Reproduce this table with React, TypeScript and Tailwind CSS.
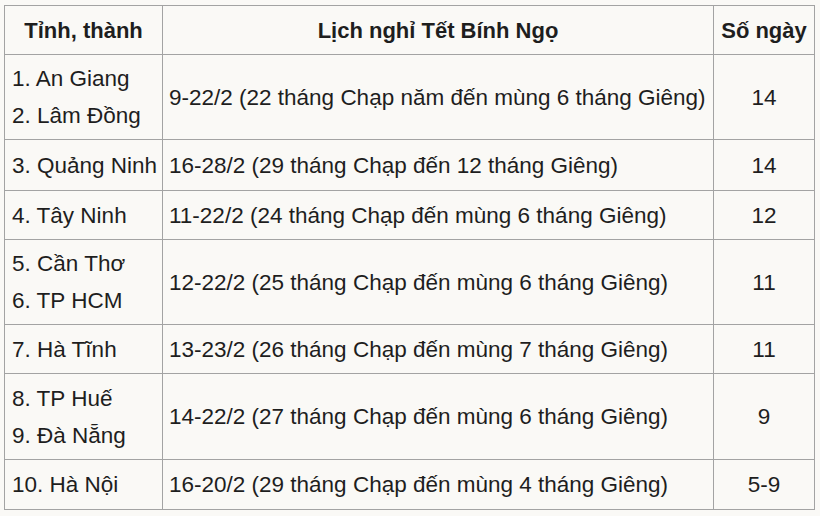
import React from "react";

type Row = { names: string[]; schedule: string; days: string; h: string };

const rows: Row[] = [
  { names: ["1. An Giang", "2. Lâm Đồng"], schedule: "9-22/2 (22 tháng Chạp năm đến mùng 6 tháng Giêng)", days: "14", h: "h-[85px]" },
  { names: ["3. Quảng Ninh"], schedule: "16-28/2 (29 tháng Chạp đến 12 tháng Giêng)", days: "14", h: "h-[51px]" },
  { names: ["4. Tây Ninh"], schedule: "11-22/2 (24 tháng Chạp đến mùng 6 tháng Giêng)", days: "12", h: "h-[49px]" },
  { names: ["5. Cần Thơ", "6. TP HCM"], schedule: "12-22/2 (25 tháng Chạp đến mùng 6 tháng Giêng)", days: "11", h: "h-[85px]" },
  { names: ["7. Hà Tĩnh"], schedule: "13-23/2 (26 tháng Chạp đến mùng 7 tháng Giêng)", days: "11", h: "h-[49px]" },
  { names: ["8. TP Huế", "9. Đà Nẵng"], schedule: "14-22/2 (27 tháng Chạp đến mùng 6 tháng Giêng)", days: "9", h: "h-[86px]" },
  { names: ["10. Hà Nội"], schedule: "16-20/2 (29 tháng Chạp đến mùng 4 tháng Giêng)", days: "5-9", h: "h-[50px]" },
];

export default function App() {
  return (
    <div
      className="w-[820px] h-[516px] bg-[#faf9f6] pt-[5px] pl-[4px] text-[#1e1e1e] text-[22.5px] overflow-hidden"
      style={{ fontFamily: '"Liberation Sans", Arial, sans-serif' }}
    >
      <table className="table-fixed border-collapse w-[810px]">
        <colgroup>
          <col className="w-[158px]" />
          <col className="w-[551px]" />
          <col className="w-[101px]" />
        </colgroup>
        <thead>
          <tr className="h-[49px]">
            <th className="border border-[#a3a3a3] font-bold text-[22px] text-center align-middle px-[4px] whitespace-nowrap">Tỉnh, thành</th>
            <th className="border border-[#a3a3a3] font-bold text-[22px] text-center align-middle px-[4px] whitespace-nowrap">Lịch nghỉ Tết Bính Ngọ</th>
            <th className="border border-[#a3a3a3] font-bold text-[22px] text-center align-middle px-0 whitespace-nowrap">Số ngày</th>
          </tr>
        </thead>
        <tbody>
          {rows.map((r, i) => (
            <tr key={i} className={r.h}>
              <td className="border border-[#a3a3a3] align-middle pl-[7px] pr-0 leading-[37px] whitespace-nowrap">
                {r.names.map((n, j) => (
                  <div key={j}>{n}</div>
                ))}
              </td>
              <td className="border border-[#a3a3a3] align-middle pl-[6px] pr-0 leading-[37px] whitespace-nowrap">
                {r.schedule}
              </td>
              <td className="border border-[#a3a3a3] align-middle text-center leading-[37px]">{r.days}</td>
            </tr>
          ))}
        </tbody>
      </table>
    </div>
  );
}
